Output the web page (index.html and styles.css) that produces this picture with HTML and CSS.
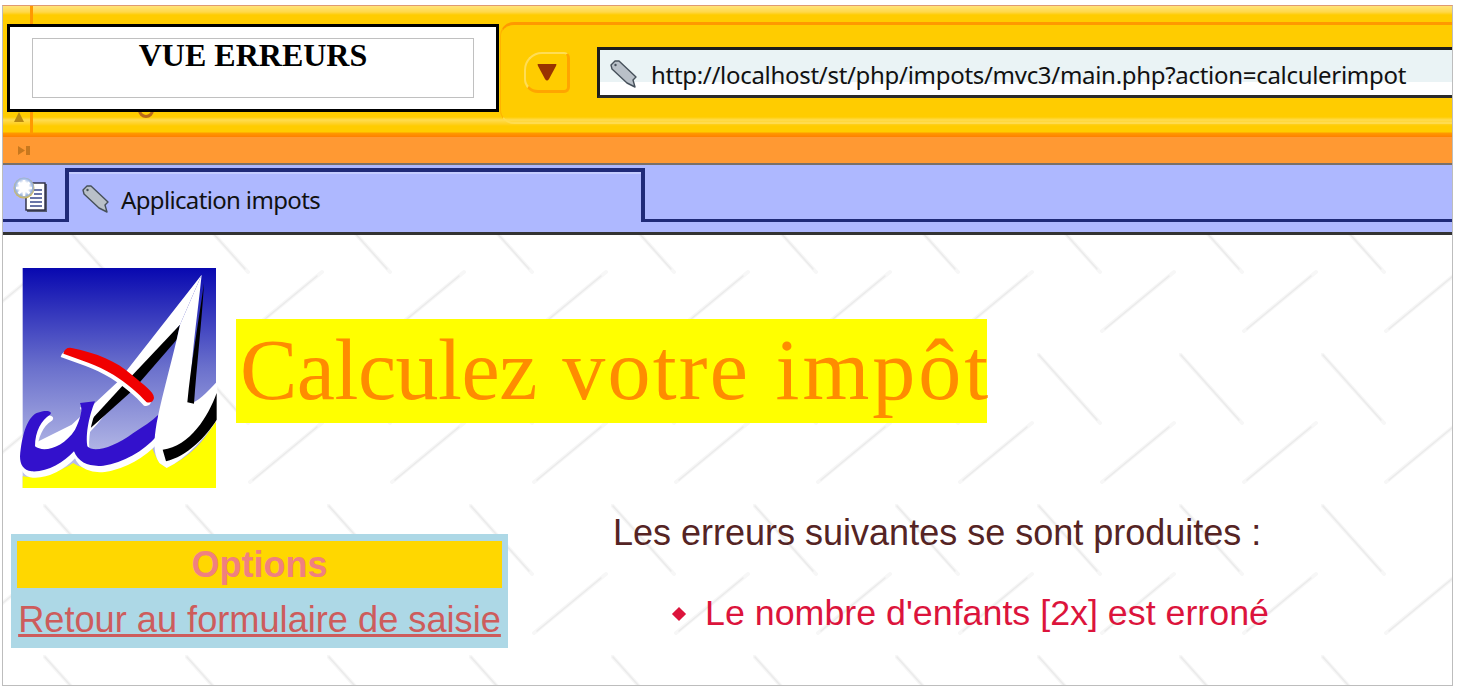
FILE: index.html
```html
<!DOCTYPE html>
<html lang="fr">
<head>
<meta charset="utf-8">
<title>Application impots</title>
<link rel="stylesheet" href="styles.css">
</head>
<body>
<div class="window">
  <div class="toolbar">
    <div class="grip">
      <svg class="grip-icon" width="12" height="12" viewBox="0 0 12 12"><path d="M6 1 L11 11 L1 11 Z" fill="#b98a12"/></svg>
    </div>
    <div class="navzone"><span class="navbtn"></span></div>
    <div class="address-group">
      <span class="dropbtn">
        <svg width="22" height="20" viewBox="0 0 22 20"><path d="M2 2 H20 Q21 2 20 4 L13 17 Q11 20 9 17 L2 4 Q1 2 2 2 Z" fill="#993300"/></svg>
      </span>
      <div class="urlbar">
        <svg class="tag" width="30" height="30" viewBox="0 0 30 30"><path d="M2 6 L6 2 L10 2 L27 18 L24 21 L26 28 L18 24 L3 10 Z" fill="#b9c0c8" stroke="#46505a" stroke-width="1.4" stroke-linejoin="round"/><circle cx="6.5" cy="6" r="1.2" fill="#46505a"/></svg>
        <span class="url">http://localhost/st/php/impots/mvc3/main.php?action=calculerimpot</span>
      </div>
    </div>
  </div>
  <div class="statusbar">
    <svg width="13" height="9" viewBox="0 0 13 9"><path d="M0 0 L7 4.5 L0 9 Z M8 0 H12 V9 H8 Z" fill="#c8781e"/></svg>
  </div>
  <div class="tabbar">
    <div class="tabstrip">
      <div class="newtab">
        <svg width="36" height="36" viewBox="0 0 36 36">
          <defs><radialGradient id="star" cx="50%" cy="45%" r="55%"><stop offset="0.4" stop-color="#ffffff"/><stop offset="0.75" stop-color="#9ab4e0"/><stop offset="1" stop-color="#d8b840"/></radialGradient></defs>
          <rect x="14" y="7" width="20" height="28" fill="#555a70"/>
          <rect x="13" y="6" width="19" height="27" fill="#ffffff" stroke="#2a2a40" stroke-width="1.4"/>
          <path d="M21 13 H29 M21 17 H29 M17 21 H29 M17 25 H29 M17 29 H29" stroke="#3a4a8a" stroke-width="1.6"/>
          <circle cx="11" cy="11" r="10.5" fill="url(#star)"/>
          <path d="M11 3 V19 M3 11 H19 M5.5 5.5 L16.5 16.5 M16.5 5.5 L5.5 16.5" stroke="#ffffff" stroke-width="2.6"/>
        </svg>
      </div>
      <div class="tab">
        <svg class="tag" width="30" height="30" viewBox="0 0 30 30"><path d="M2 6 L6 2 L10 2 L27 18 L24 21 L26 28 L18 24 L3 10 Z" fill="#b9c0c8" stroke="#46505a" stroke-width="1.4" stroke-linejoin="round"/><circle cx="6.5" cy="6" r="1.2" fill="#46505a"/></svg>
        <span class="tab-title">Application impots</span>
      </div>
      <div class="tabrest"></div>
    </div>
  </div>
  <main class="page">
    <header class="masthead">
      <svg class="logo" width="198" height="222" viewBox="60 55 594 666">
        <defs><linearGradient id="sky" x1="0" y1="0" x2="0" y2="1"><stop offset="0" stop-color="#0808b0"/><stop offset="0.45" stop-color="#6a70cc"/><stop offset="0.85" stop-color="#b4b8e6"/><stop offset="1" stop-color="#c4c8ec"/></linearGradient></defs>
        <rect x="68" y="55" width="580" height="660" fill="url(#sky)"/>
        <path d="M68 715 V680 C120 690 190 660 220 640 C250 665 330 665 400 630 L455 590 C465 620 480 650 500 652 C570 625 620 565 648 510 V715 Z" fill="#ffff00"/>
        <path d="M605 75 L355 395 L215 525 L105 580 L110 612 L230 590 L290 525 L540 225 Z" fill="#ffffff"/>
        <path d="M540 225 L380 395 L265 520 L272 535 L400 420 L530 270 Z" fill="#000000"/>
        <path transform="translate(4 16)" d="M60 620 C65 560 80 505 110 490 C140 478 160 485 150 495 C125 510 105 545 105 590 C130 610 190 595 225 540 C240 510 250 480 240 460 L285 455 C275 480 255 540 262 590 C280 610 340 595 400 550 C430 530 455 515 475 495 L470 560 C430 605 370 640 310 648 C270 652 235 640 222 605 C190 640 140 668 95 665 C70 662 60 645 60 620 Z" fill="#ffffff" stroke="#ffffff" stroke-width="6"/>
        <path d="M60 620 C65 560 80 505 110 490 C140 478 160 485 150 495 C125 510 105 545 105 590 C130 610 190 595 225 540 C240 510 250 480 240 460 L285 455 C275 480 255 540 262 590 C280 610 340 595 400 550 C430 530 455 515 475 495 L470 560 C430 605 370 640 310 648 C270 652 235 640 222 605 C190 640 140 668 95 665 C70 662 60 645 60 620 Z" fill="#3311cc"/>
        <path d="M605 75 L540 225 C520 320 490 420 470 520 C462 570 458 610 478 640 L500 655 C560 625 615 565 652 510 L652 395 C620 430 590 460 570 460 C570 340 590 220 605 75 Z" fill="#ffffff"/>
        <path d="M612 100 C595 220 572 350 562 458 L582 462 C590 350 605 220 612 100 Z" fill="#000000"/>
        <path d="M650 430 C625 500 570 590 488 600 L498 635 C560 620 620 560 650 510 Z" fill="#000000"/>
        <g transform="translate(-8 10)"><path d="M190 312 Q195 292 215 295 C290 310 350 335 395 375 C430 405 462 425 462 445 Q458 462 440 458 C415 430 380 400 340 375 C290 345 240 330 190 312 Z" fill="#ffffff"/></g>
        <path d="M190 312 Q195 292 215 295 C290 310 350 335 395 375 C430 405 462 425 462 445 Q458 462 440 458 C415 430 380 400 340 375 C290 345 240 330 190 312 Z" fill="#f00000"/>
      </svg>
      <h1 class="title"><span class="word-first">Calculez</span> <span class="word-mid">votre</span> <span class="word-last">impôt</span></h1>
    </header>
    <div class="lower">
      <table class="options">
        <tr><th class="options-head">Options</th></tr>
        <tr><td class="options-link"><a href="#" class="back">Retour au formulaire de saisie</a></td></tr>
      </table>
      <section class="messages">
        <p class="intro">Les erreurs suivantes se sont produites :</p>
        <ul class="errors">
          <li class="error">Le nombre d'enfants [2x] est erroné</li>
        </ul>
      </section>
    </div>
  </main>
  <div class="view-box">
    <div class="view-inner">VUE ERREURS</div>
  </div>
</div>
</body>
</html>
```
FILE: styles.css
```css
* { box-sizing: border-box; }
html, body { margin: 0; padding: 0; background: #ffffff; }
body { height: 686px; overflow: hidden; }

.window {
  position: relative;
  margin: 5px 4px 0 2px;
  height: 681px;
  border: 1px solid #bdbdbd;
  border-top-color: #e09a70;
  overflow: hidden;
  display: flex;
  flex-direction: column;
}

/* toolbars */
.toolbar {
  flex: none;
  height: 131px;
  display: flex;
  align-items: stretch;
  padding-top: 16px;
  background: linear-gradient(#ffe47a 0, #ffd84a 6px, #ffcc00 9px, #ffcc00 111px, #ffdc50 114px, #ffd020 118px, #ffcc00 120px, #ffcc00 126px, #ff9900 127px, #ff7f00 131px);
}
.grip {
  flex: none;
  width: 30px;
  margin-top: -16px;
  margin-bottom: 4px;
  border-right: 3px solid #ff9900;
  display: flex;
  align-items: flex-end;
  justify-content: center;
  padding: 0 0 10px 4px;
}
.navzone { flex: none; width: 467px; padding: 80px 0 0 105px; }
.navbtn {
  display: block;
  width: 16px;
  height: 16px;
  border-radius: 50%;
  border: 3px solid #b9691a;
  background: #ffcc00;
}
.address-group {
  flex: 1;
  height: 102px;
  display: flex;
  align-items: center;
  padding-left: 23px;
  gap: 27px;
  border-top: 3px solid #ff9900;
  border-left: 1px solid #ffb300;
  border-bottom: 2px solid #ffdc50;
  border-radius: 14px 0 0 14px;
}
.dropbtn {
  flex: none;
  width: 46px;
  height: 41px;
  margin-top: -2px;
  display: flex;
  align-items: center;
  justify-content: center;
  border-radius: 18px 6px 6px 14px;
  border-right: 3px solid #ffa500;
  border-bottom: 3px solid #ffa500;
  border-left: 2px solid #ffdd55;
  border-top: 2px solid #ffdd55;
}
.urlbar {
  flex: 1;
  height: 51px;
  margin-top: -2px;
  display: flex;
  align-items: center;
  padding: 3px 0 0 9px;
  gap: 12px;
  border-top: 3px solid #1c1c1c;
  border-left: 3px solid #1c1c1c;
  border-bottom: 3px solid #2a2a2a;
  background: linear-gradient(#eaf3f5 0, #eaf3f5 32px, #ffffff 32px);
}
.tag { flex: none; }
.url, .tab-title {
  font-family: "Noto Sans", sans-serif;
  font-size: 24px;
  color: #111111;
  white-space: nowrap;
}
.url { letter-spacing: -0.3px; }
.tab-title { letter-spacing: -0.65px; }

.statusbar {
  flex: none;
  height: 28px;
  background: #ff9933;
  border-bottom: 2px solid #7a7068;
  padding-left: 15px;
  display: flex;
  align-items: center;
}

.tabbar {
  flex: none;
  height: 70px;
  background: #aeb8ff;
  border-bottom: 3px solid #333333;
}
.tabstrip { display: flex; height: 57px; }
.newtab {
  flex: none;
  width: 62px;
  border-bottom: 3px solid #1f2a78;
  padding: 12px 0 0 10px;
}
.tab {
  flex: none;
  width: 580px;
  margin-top: 3px;
  border: 4px solid #1f2a78;
  border-bottom: none;
  display: flex;
  align-items: center;
  gap: 10px;
  padding: 4px 0 0 12px;
  box-shadow: inset 0 2px 0 #c4ccff;
}
.tabrest { flex: 1; border-bottom: 3px solid #1f2a78; }

/* page */
.page {
  flex: 1;
  min-height: 0;
  background-color: #ffffff;
  background-image: url("data:image/svg+xml,%3Csvg xmlns='http://www.w3.org/2000/svg' width='142' height='151'%3E%3Cg fill='none' stroke-linecap='round'%3E%3Cpath d='M0 0L63 70M65 129L137 70' stroke='%23f7f7f7' stroke-width='4'/%3E%3Cpath d='M2 2L60 67M68 127L132 74' stroke='%23ebebeb' stroke-width='1.5'/%3E%3C/g%3E%3C/svg%3E");
  background-position: 40px -33px;
  padding: 33px 0 0 0;
}
.masthead {
  display: flex;
  align-items: center;
  gap: 18px;
  height: 222px;
  padding-left: 17px;
}
.logo { flex: none; }
.title {
  flex: none;
  width: 751px;
  margin: 0 0 17px 0;
  padding-left: 4px;
  font-family: "Liberation Serif", serif;
  font-weight: normal;
  font-size: 86px;
  word-spacing: 4px;
  line-height: 102px;
  height: 104px;
  color: #ff8c00;
  background: #ffff00;
  white-space: nowrap;
}
.word-first { letter-spacing: -0.5px; }
.word-mid { letter-spacing: 2.2px; }
.word-last { letter-spacing: 3px; }
.lower {
  display: flex;
  align-items: flex-start;
  margin-top: 23px;
  padding-left: 8px;
}
.options {
  flex: none;
  width: 497px;
  margin-top: 21px;
  border-collapse: separate;
  border-spacing: 0;
  background: #add8e6;
  padding: 7px 6px 8px;
  font-family: "Liberation Sans", sans-serif;
}
.options-head {
  height: 47px;
  padding: 0;
  background: #ffd700;
  color: #f08080;
  font-size: 36px;
  font-weight: bold;
  text-align: center;
  line-height: 43px;
}
.options-link {
  padding: 11px 0 0;
  font-size: 36.2px;
  line-height: 41px;
  height: 52px;
  text-align: center;
  white-space: nowrap;
}
.back { color: #cd5c5c; }
.messages {
  flex: none;
  margin-left: 105px;
  font-family: "Liberation Sans", sans-serif;
  font-size: 36px;
  line-height: 41px;
}
.intro { margin: -1px 0 0; color: #552424; white-space: nowrap; }
.errors { list-style: none; margin: 40px 0 0; padding: 0 0 0 61px; }
.error {
  display: flex;
  align-items: center;
  gap: 21px;
  font-size: 35.8px;
  color: #dc143c;
  white-space: nowrap;
}
.error::before {
  content: "";
  flex: none;
  width: 10px;
  height: 10px;
  background: #dc143c;
  transform: rotate(45deg);
}

/* floating caption box */
.view-box {
  position: absolute;
  left: 4px;
  top: 18px;
  width: 492px;
  height: 88px;
  border: 3px solid #000000;
  background: #ffffff;
  padding: 11px 22px 11px 22px;
}
.view-inner {
  height: 60px;
  border: 1px solid #c0c0c0;
  font-family: "Liberation Serif", serif;
  font-weight: bold;
  font-size: 32px;
  line-height: 32px;
  text-align: center;
  color: #000000;
}
```
